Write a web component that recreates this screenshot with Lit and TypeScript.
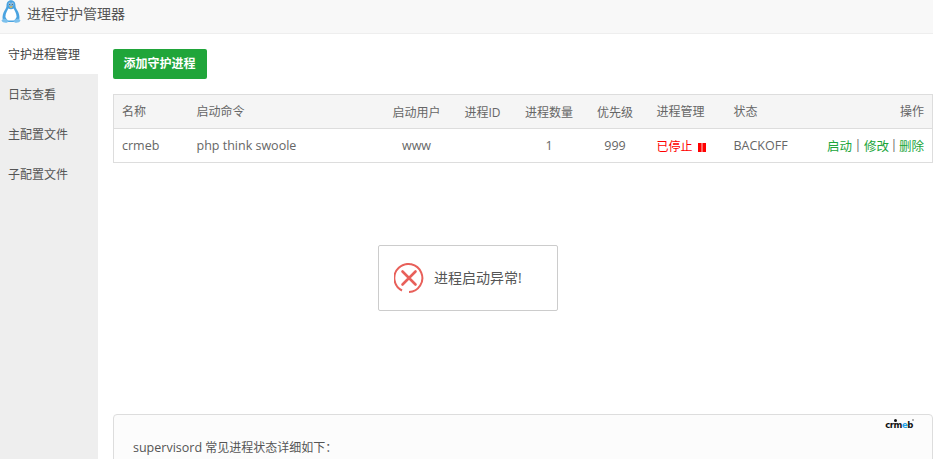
import { LitElement, html, css } from "lit";
import { customElement } from "lit/decorators.js";

@customElement("app-root")
export class AppRoot extends LitElement {
  static styles = css`
    :host {
      display: block;
      width: 933px;
      height: 459px;
      overflow: hidden;
      position: relative;
      background: #fff;
      font-family: "Open Sans", "Noto Sans CJK SC", sans-serif;
      font-size: 12px;
      color: #666;
    }
    .top {
      height: 33px;
      background: #f8f8f8;
      border-bottom: 1px solid #eee;
      display: flex;
      align-items: flex-start;
    }
    .logo { width: 20px; height: 24px; margin-left: 1px; display: block; }
    .title { margin-left: 6px; font-size: 14px; line-height: 27px; color: #555; }
    .body { display: flex; height: 425px; }
    .side { width: 98px; background: #eee; flex: none; }
    .side div { height: 40px; line-height: 42px; padding-left: 8px; font-size: 12px; color: #555; }
    .side .on { background: #fff; line-height: 41px; color: #444; }
    .main { flex: 1; padding: 15px 0 0 15px; min-width: 0; }
    .btn {
      width: 94px; height: 30px; box-sizing: border-box; padding-right: 1px; background: #20a53a; color: #fff; font-weight: 700;
      border-radius: 2px; font-size: 12px; line-height: 30px; text-align: center;
      margin-bottom: 15px;
    }
    table {
      width: 820px; border-collapse: collapse; table-layout: fixed; border: 1px solid #ddd;
      font-size: 12px; color: #666;
    }
    th, td { padding: 0 8px; height: 34px; font-weight: 400; text-align: left; white-space: nowrap; box-sizing: border-box; overflow: visible; }
    th { background: #f5f5f5; border-bottom: 1px solid #ddd; padding-bottom: 1px; }
    .c { text-align: center; padding: 0; }
    .p { padding-right: 3px; }
    .r { text-align: right; }
    .l { font-size: 12.5px; }
    .red { color: #f00; }
    .pause { display: inline-block; vertical-align: -1px; margin-left: 2px; width: 8px; height: 9px; }
    .ops { display: inline-flex; justify-content: flex-end; font-size: 12.5px; }
    .g { color: #20a53a; }
    .s1 { width: 12px; text-align: center; }
    .s2 { width: 10px; text-align: center; }
    .opcell { padding-right: 8px; }
    .card {
      margin-top: 251px; height: 120px; width: 820px; box-sizing: border-box;
      border: 1px solid #ddd; border-radius: 4px; background: #fcfcfc;
      padding: 23px 0 0 19px; position: relative; color: #555; font-size: 12px;
    }
    .lat { font-size: 12.5px; }
    .brand {
      position: absolute; top: 4px; right: 19px; font-size: 8.5px; font-weight: 700; line-height: 12px;
      color: #111; letter-spacing: -0.45px; font-family: "DejaVu Sans", sans-serif;
    }
    .brand b { color: #20a0e6; }
    .brand i { position: absolute; left: 9px; top: 0; width: 3px; height: 3px; border-radius: 50%; background: #111; }
    .brand u { position: absolute; right: -1px; top: 0; width: 2px; height: 2px; border-radius: 50%; background: #999; }
    .toast {
      position: absolute; left: 378px; top: 245px; width: 180px; height: 66px; box-sizing: border-box;
      background: #fff; border: 1px solid #ccc; border-radius: 2px;
      display: flex; align-items: center; padding: 0 0 2px 15px; font-size: 14px; color: #555;
    }
    .toast svg { width: 30px; height: 30px; margin: 2px 10px 0 0; flex: none; }
  `;

  render() {
    return html`
      <div class="top">
        <svg class="logo" viewBox="0 0 20 24">
          <path d="M10 .3C7 .3 5.5 2.5 5.5 6c0 1.8-1.2 3-2.2 5C2.200 13 1.500 15 1.500 18.500L5 22h10l3.500-3.500C18.500 15 17.800 13 16.700 11c-1-2-2.200-3.200-2.200-5C14.500 2.500 13 .3 10 .3z" fill="#4aa3e0"/>
          <path d="M7.400 8.500c1.500 1 3.700 1 5.200 0 .8 2 3 4.500 3 8.500l-2 3.500h-7.200l-2-3.500c0-4 2.200-6.500 3-8.500z" fill="#fff"/>
          <path d="M7.800 2.800h1.600v2.600H7.800zM10.600 2.800h1.600v2.600h-1.600z" fill="#fff"/>
          <path d="M8.200 3.500h1v1.800h-1zM10.800 3.500h1v1.800h-1z" fill="#1c4a70"/>
          <path d="M7.800 6.300h4.400L10 8.300z" fill="#e8b850"/>
          <path d="M.5 20.500c1-2.500 5.300-2.500 7 .5 0 2.400-6 2.400-7-.5zM19.500 20.500c-1-2.500-5.300-2.500-7 .5 0 2.400 6 2.400 7-.5z" fill="#7cc0ec"/>
        </svg>
        <div class="title">进程守护管理器</div>
      </div>
      <div class="body">
        <div class="side">
          <div class="on">守护进程管理</div>
          <div>日志查看</div>
          <div>主配置文件</div>
          <div>子配置文件</div>
        </div>
        <div class="main">
          <div class="btn">添加守护进程</div>
          <table>
            <colgroup>
              <col style="width:75px" /><col style="width:193px" /><col style="width:70px" />
              <col style="width:62px" /><col style="width:71px" /><col style="width:64px" />
              <col style="width:77px" /><col style="width:76px" /><col />
            </colgroup>
            <thead>
              <tr>
                <th>名称</th><th>启动命令</th><th class="c">启动用户</th><th class="c">进程ID</th>
                <th class="c">进程数量</th><th class="c p">优先级</th><th>进程管理</th><th>状态</th>
                <th class="r">操作</th>
              </tr>
            </thead>
            <tbody>
              <tr>
                <td class="l">crmeb</td><td class="l">php think swoole</td><td class="c l">www</td><td class="c"></td>
                <td class="c l">1</td><td class="c p l">999</td>
                <td class="red">已停止
                  <svg class="pause" viewBox="0 0 8 9"><path d="M0 0h3.600v9H0zM4.400 0H8v9H4.400z" fill="#f00" /></svg>
                </td>
                <td class="l">BACKOFF</td>
                <td class="r opcell"><span class="ops"><span class="g">启动</span><span class="s1">|</span><span class="g">修改</span><span class="s2">|</span><span class="g">删除</span></span></td>
              </tr>
            </tbody>
          </table>
          <div class="card">
            <span class="brand"><i></i><u></u>crm<b>e</b>b</span>
            <span class="lat">supervisord</span> 常见进程状态详细如下：
          </div>
        </div>
      </div>
      <div class="toast">
        <svg viewBox="0 0 30 30">
          <path d="M8 27.500A14 14 0 1 1 15 29" fill="none" stroke="#e8605a" stroke-width="2" />
          <path d="M8.500 8.500l13 13M21.500 8.500l-13 13" stroke="#e8605a" stroke-width="2.600" stroke-linecap="round" />
        </svg>
        进程启动异常!
      </div>
    `;
  }
}
